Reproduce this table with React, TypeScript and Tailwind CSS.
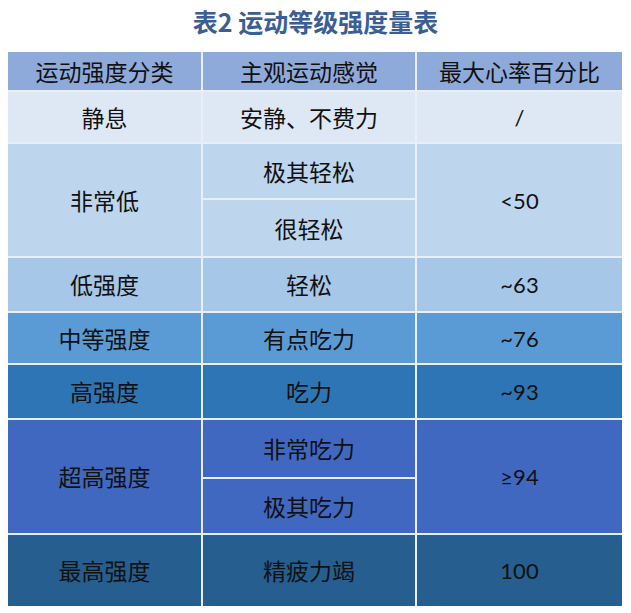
const font = { fontFamily: '"Noto Sans CJK SC", "Noto Sans", sans-serif' };

type Cell = { text: string; col: number; row: number; rowSpan?: number; bg: string; num?: boolean };

const cells: Cell[] = [
  { text: "运动强度分类", col: 1, row: 1, bg: "bg-[#8eaadb]" },
  { text: "主观运动感觉", col: 2, row: 1, bg: "bg-[#8eaadb]" },
  { text: "最大心率百分比", col: 3, row: 1, bg: "bg-[#8eaadb]" },

  { text: "静息", col: 1, row: 2, bg: "bg-[#dee8f5]" },
  { text: "安静、不费力", col: 2, row: 2, bg: "bg-[#dee8f5]" },
  { text: "/", col: 3, row: 2, bg: "bg-[#dee8f5]", num: true },

  { text: "非常低", col: 1, row: 3, rowSpan: 2, bg: "bg-[#bdd6ee]" },
  { text: "极其轻松", col: 2, row: 3, bg: "bg-[#bdd6ee]" },
  { text: "很轻松", col: 2, row: 4, bg: "bg-[#bdd6ee]" },
  { text: "<50", col: 3, row: 3, rowSpan: 2, bg: "bg-[#bdd6ee]", num: true },

  { text: "低强度", col: 1, row: 5, bg: "bg-[#a7c7e9]" },
  { text: "轻松", col: 2, row: 5, bg: "bg-[#a7c7e9]" },
  { text: "~63", col: 3, row: 5, bg: "bg-[#a7c7e9]", num: true },

  { text: "中等强度", col: 1, row: 6, bg: "bg-[#5b9bd5]" },
  { text: "有点吃力", col: 2, row: 6, bg: "bg-[#5b9bd5]" },
  { text: "~76", col: 3, row: 6, bg: "bg-[#5b9bd5]", num: true },

  { text: "高强度", col: 1, row: 7, bg: "bg-[#2e75b6]" },
  { text: "吃力", col: 2, row: 7, bg: "bg-[#2e75b6]" },
  { text: "~93", col: 3, row: 7, bg: "bg-[#2e75b6]", num: true },

  { text: "超高强度", col: 1, row: 8, rowSpan: 2, bg: "bg-[#4068c0]" },
  { text: "非常吃力", col: 2, row: 8, bg: "bg-[#4068c0]" },
  { text: "极其吃力", col: 2, row: 9, bg: "bg-[#4068c0]" },
  { text: "≥94", col: 3, row: 8, rowSpan: 2, bg: "bg-[#4068c0]", num: true },

  { text: "最高强度", col: 1, row: 10, bg: "bg-[#255e8f]" },
  { text: "精疲力竭", col: 2, row: 10, bg: "bg-[#255e8f]" },
  { text: "100", col: 3, row: 10, bg: "bg-[#255e8f]", num: true },
];

export default function App() {
  return (
    <div className="w-[631px] h-[613px] bg-white pt-[4px]" style={font}>
      <h1 className="text-center text-[25px] leading-[34px] font-bold text-[#3b5e94]">表2 运动等级强度量表</h1>
      <div
        className="mt-[14px] ml-[8px] w-[614px] grid grid-cols-[193px_212px_205px] grid-rows-[38px_50px_54px_56px_53px_50px_53px_57px_54px_71px] gap-[2px] bg-[#e8eff9]"
      >
        {cells.map((c) => (
          <div
            key={c.text + c.row}
            className={`${c.bg} flex items-center justify-center text-[#111111] ${c.num ? "text-[22px]" : "text-[23px]"}`}
            style={{
              gridColumn: c.col,
              gridRow: c.rowSpan ? `${c.row} / span ${c.rowSpan}` : c.row,
              fontFamily: c.num ? 'Lato, "Noto Sans CJK SC", sans-serif' : undefined,
            }}
          >
            {c.text}
          </div>
        ))}
      </div>
    </div>
  );
}
